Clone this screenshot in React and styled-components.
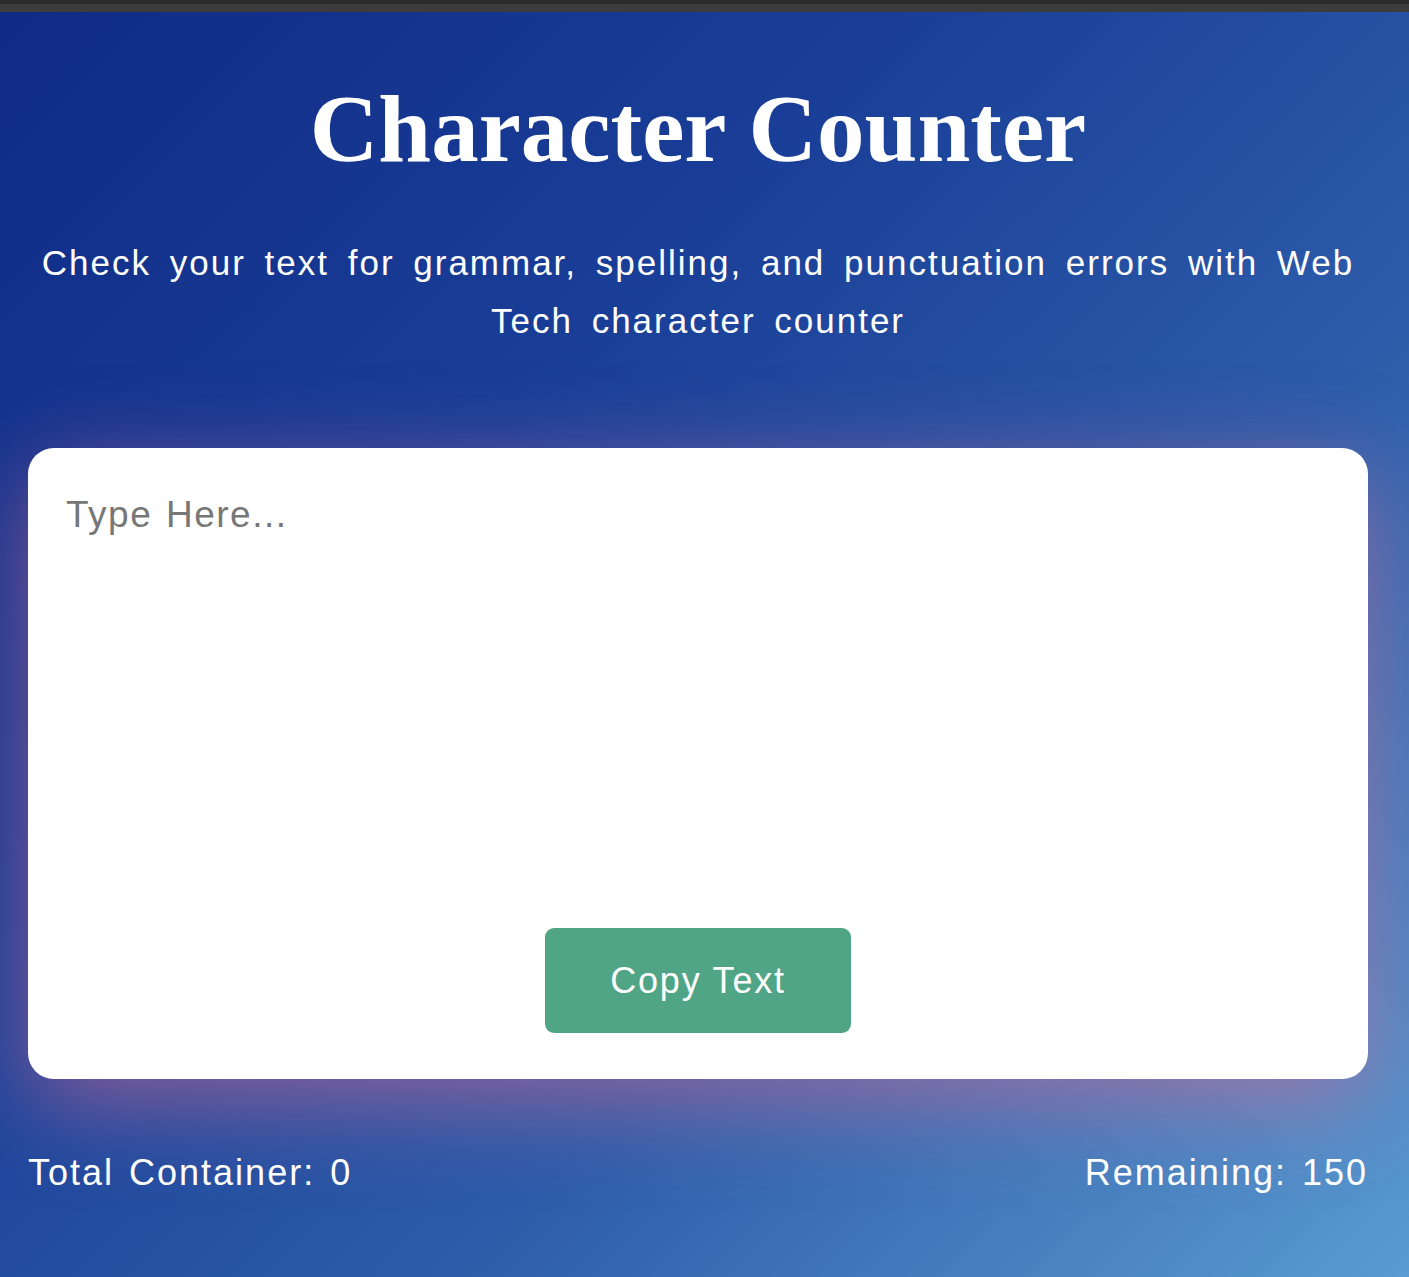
import React, { useState } from "react";
import styled, { createGlobalStyle } from "styled-components";

const Global = createGlobalStyle`
  html, body { margin: 0; padding: 0; }
  body { font-family: "Liberation Sans", Arial, sans-serif; background: #1d3f96; }
  * { box-sizing: border-box; }
`;

const Page = styled.div`
  min-height: 100vh;
  display: flex;
  flex-direction: column;
  background:
    linear-gradient(135deg, #0f2a85 0%, #1a3f98 35%, #2e5daa 65%, #5a9bd1 100%);
`;

const TopBar = styled.div`
  height: 12px;
  border-top: 4px solid #2c2c2c;
  background: #3c3c3c;
  flex: none;
`;

const Main = styled.main`
  display: flex;
  flex-direction: column;
  align-items: stretch;
  padding: 60px 41px 60px 28px;
`;

const Title = styled.h1`
  margin: 0;
  font-family: "Liberation Serif", "Times New Roman", serif;
  font-weight: 700;
  font-size: 95px;
  line-height: 115px;
  color: #ffffff;
  text-align: center;
`;

const Subtitle = styled.p`
  margin: 47px 0 0;
  font-size: 35px;
  line-height: 58px;
  letter-spacing: 2px;
  word-spacing: 7px;
  color: #ffffff;
  text-align: center;
`;

const Card = styled.section`
  margin-top: 98px;
  height: 631px;
  background: #ffffff;
  border-radius: 26px;
  padding: 46px 38px 46px;
  display: flex;
  flex-direction: column;
  align-items: center;
  box-shadow: 0 24px 90px rgba(220, 110, 150, 0.55);
`;

const TextArea = styled.textarea`
  flex: 1;
  width: 100%;
  border: none;
  outline: none;
  resize: none;
  padding: 0;
  background: transparent;
  font-family: "Liberation Sans", Arial, sans-serif;
  font-size: 37px;
  letter-spacing: 1.5px;
  word-spacing: 2px;
  color: #333;
  &::placeholder { color: #777777; }
`;

const CopyButton = styled.button`
  flex: none;
  width: 306px;
  height: 105px;
  border: none;
  border-radius: 9px;
  background: #4fa586;
  color: #ffffff;
  font-family: "Liberation Sans", Arial, sans-serif;
  font-size: 36px;
  letter-spacing: 1.8px;
  cursor: pointer;
`;

const Footer = styled.div`
  margin-top: 72px;
  display: flex;
  justify-content: space-between;
  font-size: 36px;
  line-height: 1.2;
  letter-spacing: 2px;
  word-spacing: 3px;
  color: #ffffff;
`;

const Stat = styled.span`
  padding: 0;
`;

export default function App() {
  const [text, setText] = useState("");
  const max = 150;
  return (
    <Page>
      <Global />
      <TopBar />
      <Main>
        <Title>Character Counter</Title>
        <Subtitle>
          Check your text for grammar, spelling, and punctuation errors with Web
          Tech character counter
        </Subtitle>
        <Card>
          <TextArea
            placeholder="Type Here..."
            value={text}
            maxLength={max}
            onChange={(e) => setText(e.target.value)}
          />
          <CopyButton onClick={() => navigator.clipboard?.writeText(text)}>
            Copy Text
          </CopyButton>
        </Card>
        <Footer>
          <Stat>Total Container: {text.length}</Stat>
          <Stat>Remaining: {max - text.length}</Stat>
        </Footer>
      </Main>
    </Page>
  );
}
